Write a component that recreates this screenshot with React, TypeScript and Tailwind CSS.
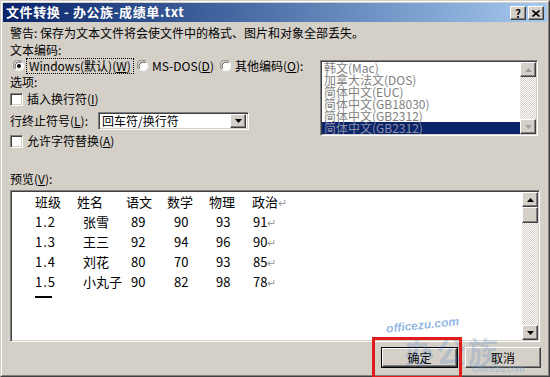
import React from "react";

const raised =
  "border border-t-white border-l-white border-r-[#404040] border-b-[#404040] shadow-[inset_-1px_-1px_#808080] bg-[#d4d0c8]";
const sunken =
  "border border-t-[#808080] border-l-[#808080] border-r-white border-b-white shadow-[inset_1px_1px_#404040,inset_-1px_-1px_#d4d0c8]";
const track =
  "bg-[image:repeating-conic-gradient(#d4d0c8_0_25%,#ffffff_0_50%)] bg-[length:2px_2px]";

function Arrow({ up = false, color = "#000" }: { up?: boolean; color?: string }) {
  return (
    <svg width="7" height="4" viewBox="0 0 7 4">
      {up ? (
        <path d="M3.5 0 L7 4 L0 4 Z" fill={color} />
      ) : (
        <path d="M0 0 L7 0 L3.5 4 Z" fill={color} />
      )}
    </svg>
  );
}

function Radio({ checked = false }: { checked?: boolean }) {
  return (
    <svg width="12" height="12" viewBox="0 0 12 12" className="shrink-0">
      <circle cx="6" cy="6" r="5.5" fill="#ffffff" stroke="#d4d0c8" />
      <path d="M1.6 9.2 A5.2 5.2 0 0 1 9.2 1.6" fill="none" stroke="#808080" />
      <path d="M2.6 8.4 A4.2 4.2 0 0 1 8.4 2.6" fill="none" stroke="#404040" />
      {checked && <circle cx="6" cy="6" r="2" fill="#000" />}
    </svg>
  );
}

function Checkbox() {
  return <div className={`w-[13px] h-[13px] bg-white shrink-0 ${sunken}`} />;
}

const listItems = [
  "韩文(Mac)",
  "加拿大法文(DOS)",
  "简体中文(EUC)",
  "简体中文(GB18030)",
  "简体中文(GB2312)",
];

const preview = [
  ["1.2", "张雪", "89", "90", "93", "91"],
  ["1.3", "王三", "92", "94", "96", "90"],
  ["1.4", "刘花", "80", "70", "93", "85"],
  ["1.5", "小丸子", "90", "82", "98", "78"],
];

export default function App() {
  return (
    <div className="relative w-[550px] h-[377px] overflow-hidden bg-[#d4d0c8] text-[12px] leading-[14px] text-black font-['SimSun','Noto_Sans_CJK_SC',sans-serif]">
      <div className="h-full border border-t-[#d4d0c8] border-l-[#d4d0c8] border-r-[#404040] border-b-[#404040]">
        <div className="h-full border border-t-white border-l-white border-r-[#808080] border-b-[#808080] pt-[1px] px-[1px] flex flex-col">
          {/* title bar */}
          <div className="h-[19px] shrink-0 flex items-end justify-between pl-[3px] pr-[3px] pb-[2px] bg-linear-to-r from-[#0a246a] to-[#a6caf0]">
            <span className="text-white text-[13px] leading-[15px] font-bold self-center tracking-[0.6px] whitespace-nowrap">文件转换 - 办公族-成绩单.txt</span>
            <div className="flex">
              <div className={`w-[16px] h-[14px] flex items-center justify-center text-[11px] font-bold leading-none ${raised}`}>?</div>
              <div className={`ml-[2px] w-[16px] h-[14px] flex items-center justify-center ${raised}`}>
                <svg width="8" height="7" viewBox="0 0 8 7">
                  <path d="M0.5 0.5 L7.5 6.5 M7.5 0.5 L0.5 6.5" stroke="#000" strokeWidth="1.6" />
                </svg>
              </div>
            </div>
          </div>

          <div className="pl-[7px] flex flex-col">
            <div className="mt-[4px] h-[14px] whitespace-nowrap">警告: 保存为文本文件将会使文件中的格式、图片和对象全部丢失。</div>

            <div className="flex mt-[3px]">
              <div className="w-[310px] shrink-0 flex flex-col">
                <div className="h-[14px]">文本编码:</div>
                <div className="mt-[1px] h-[16px] flex items-center whitespace-nowrap">
                  <div className="w-[127px] shrink-0 flex items-center pl-[3px]">
                    <Radio checked />
                    <div className="ml-[1px] px-[2px] h-[16px] flex items-center border border-dotted border-black">
                      Windows(默认)(<u>W</u>)
                    </div>
                  </div>
                  <div className="w-[83px] shrink-0 flex items-center">
                    <Radio />
                    <span className="ml-[3px]">MS-DOS(<u>D</u>)</span>
                  </div>
                  <div className="flex items-center">
                    <Radio />
                    <span className="ml-[3px]">其他编码(<u>O</u>):</span>
                  </div>
                </div>
                <div className="mt-[1px] h-[14px]">选项:</div>
                <div className="mt-[3px] h-[14px] flex items-center">
                  <Checkbox />
                  <span className="ml-[4px]">插入换行符(<u>I</u>)</span>
                </div>
                <div className="mt-[6px] h-[18px] flex items-center whitespace-nowrap">
                  <span className="w-[88px] shrink-0">行终止符号(<u>L</u>):</span>
                  <div className={`w-[151px] h-[18px] bg-white flex items-center justify-between pl-[3px] pr-[2px] ${sunken}`}>
                    <span>回车符/换行符</span>
                    <div className={`w-[16px] h-[14px] flex items-center justify-center ${raised}`}>
                      <Arrow />
                    </div>
                  </div>
                </div>
                <div className="mt-[4px] h-[14px] flex items-center">
                  <Checkbox />
                  <span className="ml-[4px]">允许字符替换(<u>A</u>)</span>
                </div>
              </div>

              {/* encoding list */}
              <div className={`mt-[17px] w-[218px] h-[76px] bg-white flex ${sunken} p-[1px]`}>
                <div className="flex-1 overflow-hidden text-[#808080] leading-[12px]">
                  {listItems.map((t, i) => (
                    <div key={i} className="h-[12px] pl-[2px] whitespace-nowrap">{t}</div>
                  ))}
                  <div className="h-[12px] pl-[2px] bg-[#0a246a] text-[#8f8fa8] whitespace-nowrap">简体中文(GB2312)</div>
                </div>
                <div className={`w-[16px] flex flex-col ${track}`}>
                  <div className={`h-[15px] flex items-center justify-center ${raised}`}>
                    <Arrow up color="#a0a0a0" />
                  </div>
                  <div className="flex-1" />
                  <div className={`h-[15px] flex items-center justify-center ${raised}`}>
                    <Arrow color="#a0a0a0" />
                  </div>
                </div>
              </div>
            </div>

            <div className="mt-[24px] h-[14px]">预览(<u>V</u>):</div>

            {/* preview */}
            <div className={`mt-[4px] w-[530px] h-[152px] bg-white flex ${sunken} p-[1px]`}>
              <div className="flex-1 pl-[23px] text-[13px] leading-[20px]">
                <div className="flex h-[20px] items-center">
                  <span className="w-[42px]">班级</span>
                  <span className="w-[49px]">姓名</span>
                  <span className="w-[41px]">语文</span>
                  <span className="w-[42px]">数学</span>
                  <span className="w-[43px]">物理</span>
                  <span>政治</span>
                  <span className="text-[#9a9a9a] text-[11px]">↵</span>
                </div>
                {preview.map((r) => (
                  <div key={r[0]} className="flex h-[20px] items-center">
                    <span className="w-[42px] tracking-[1px]">{r[0]}</span>
                    <span className="w-[49px] pl-[6px]">{r[1]}</span>
                    <span className="w-[41px] pl-[5px]">{r[2]}</span>
                    <span className="w-[42px] pl-[7px]">{r[3]}</span>
                    <span className="w-[43px] pl-[7px]">{r[4]}</span>
                    <span className="pl-[1px]">{r[5]}</span>
                    <span className="text-[#9a9a9a] text-[11px]">↵</span>
                  </div>
                ))}
                <div className="mt-[4px] w-[17px] h-[2px] bg-black" />
              </div>
              <div className={`w-[16px] flex flex-col ${track}`}>
                <div className={`h-[15px] flex items-center justify-center ${raised}`}>
                  <Arrow up />
                </div>
                <div className={`h-[16px] ${raised}`} />
                <div className="flex-1" />
                <div className={`h-[15px] flex items-center justify-center ${raised}`}>
                  <Arrow />
                </div>
              </div>
            </div>

            {/* buttons */}
            <div className="mt-[5px] flex justify-end pr-[6px]">
              <div className="w-[77px] h-[21px] border border-black">
                <div className={`h-full flex items-center justify-center ${raised}`}>确定</div>
              </div>
              <div className={`ml-[7px] w-[76px] h-[21px] flex items-center justify-center ${raised}`}>取消</div>
            </div>
          </div>
        </div>
      </div>

      {/* watermark */}
      <div className="absolute left-[386px] top-[318px] -rotate-6 text-[12px] italic font-bold text-[#4a86d0]/60 font-['Liberation_Sans',sans-serif]">
        officezu.com
      </div>
      <div className="absolute left-[404px] top-[332px] text-[30px] leading-[36px] font-bold text-[#2f6fc4]/20 tracking-[2px]">
        办公族
      </div>
      <div className="absolute left-[472px] top-[364px] text-[9px] leading-[10px] text-[#6a9ad8]/50 font-['Liberation_Sans',sans-serif]">
        Officezu.com
      </div>

      {/* red highlight */}
      <div className="absolute left-[372px] top-[337px] w-[90px] h-[42px] border-[3px] border-[#e01b1b]" />
    </div>
  );
}
